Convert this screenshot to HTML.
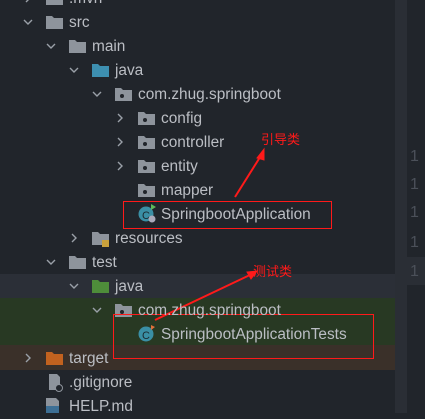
<!DOCTYPE html><html><head><meta charset="utf-8"><style>
body{margin:0;width:425px;height:413px;background:#21252b;position:relative;overflow:hidden;font-family:"Liberation Sans","Noto Sans CJK SC",sans-serif;font-size:15.4px;color:#bbbec4}
.r{position:absolute;left:0;height:24px;line-height:24px;white-space:nowrap}
.t{position:absolute;margin-top:1px}
.bg{position:absolute;left:0;width:407px}
.lab{position:absolute;color:#ff1a1a;font-size:13px;font-family:"Noto Sans CJK SC",sans-serif}
.n{position:absolute;left:410px;color:#4b5059;font-size:16px;line-height:20px}
</style></head><body>
<div class="bg" style="top:274px;height:24px;background:#2b2f37"></div>
<div class="bg" style="top:298px;height:47px;background:#283923"></div>
<div class="bg" style="top:345px;height:25px;background:#3a3029"></div>
<div style="position:absolute;left:395px;top:0;width:12px;height:413px;background:#2a2e35"></div>
<div style="position:absolute;left:407px;top:257px;width:18px;height:28px;background:#2a2e35"></div>
<div class="n" style="top:147px">1</div><div class="n" style="top:175px">1</div><div class="n" style="top:203px">1</div><div class="n" style="top:233px">1</div><div class="n" style="top:262px">1</div>
<svg width="425" height="413" style="position:absolute;left:0;top:0">
<defs>
<g id="cd"><path d="M-4 -2 L0 2 L4 -2" fill="none" stroke="#9aa0a8" stroke-width="1.4"/></g>
<g id="cr"><path d="M-2 -4 L2 0 L-2 4" fill="none" stroke="#9aa0a8" stroke-width="1.4"/></g>
<g id="fd"><path d="M0 0 H6 L8 2 H17 V13 H0 Z" fill="#8e949c"/></g>
<g id="pk"><path d="M0 0 H6 L8 2 H17 V13 H0 Z" fill="#8e949c"/><circle cx="7" cy="8" r="2" fill="#21252b"/></g>
</defs>
<use href="#cr" x="28" y="-2"/><use href="#fd" x="46" y="-8"/>
<use href="#cd" x="28" y="22"/><use href="#fd" x="46" y="16"/>
<use href="#cd" x="51" y="46"/><use href="#fd" x="69" y="40"/>
<use href="#cd" x="74" y="70"/><path d="M92 64 H98 L100 66 H109 V77 H92 Z" fill="#3d8fb0"/>
<use href="#cd" x="97" y="94"/><use href="#pk" x="115" y="88"/>
<use href="#cr" x="120" y="118"/><use href="#pk" x="138" y="112"/>
<use href="#cr" x="120" y="142"/><use href="#pk" x="138" y="136"/>
<use href="#cr" x="120" y="166"/><use href="#pk" x="138" y="160"/>
<use href="#pk" x="138" y="184"/>
<circle cx="146" cy="214" r="7.5" fill="#3a8fa5"/><text x="142" y="219" font-size="11" fill="#1a2a30" font-family="Liberation Sans">C</text><path d="M151 204 l5 3 -5 3z" fill="#5fb85a"/><circle cx="152" cy="219" r="3.5" fill="#aab"/>
<use href="#cr" x="74" y="238"/><use href="#fd" x="92" y="232"/><rect x="102" y="240" width="7" height="7" fill="#c9a13c"/>
<use href="#cd" x="51" y="262"/><use href="#fd" x="69" y="256"/>
<use href="#cd" x="74" y="286"/><path d="M92 280 H98 L100 282 H109 V293 H92 Z" fill="#4e8d3a"/>
<use href="#cd" x="97" y="310"/><use href="#pk" x="115" y="304"/>
<circle cx="146" cy="334" r="7.5" fill="#3a8fa5"/><text x="142" y="339" font-size="11" fill="#1a2a30" font-family="Liberation Sans">C</text><path d="M151 325 l4 2 -4 3z" fill="#e0703a"/>
<use href="#cr" x="28" y="358"/><path d="M46 352 H52 L54 354 H63 V365 H46 Z" fill="#c2621f"/>
<path d="M49 374 H57 L60 377 V390 H49 Z" fill="#8e949c"/><circle cx="59" cy="388" r="3.5" fill="#21252b" stroke="#8e949c"/>
<path d="M46 398 H56 L59 401 V413 H46 Z" fill="#8e949c"/><rect x="46" y="406" width="13" height="7" fill="#3d6f95"/>
<rect x="123.5" y="201.5" width="208" height="27" fill="none" stroke="#ff1a1a"/>
<rect x="113.5" y="314.5" width="260" height="44" fill="none" stroke="#ff1a1a"/>
<path d="M235 197 L262 154" stroke="#ff1a1a" stroke-width="2"/><path d="M264 149 L257 158 L264 160Z" fill="#ff1a1a" stroke="#ff1a1a"/>
<path d="M155 320 L252 274" stroke="#ff1a1a" stroke-width="2"/><path d="M257 271 L247 272 L251 279Z" fill="#ff1a1a" stroke="#ff1a1a"/>
</svg>
<div class="r t" style="left:69px;top:-14px">.mvn</div>
<div class="r t" style="left:69px;top:10px">src</div>
<div class="r t" style="left:92px;top:34px">main</div>
<div class="r t" style="left:115px;top:58px">java</div>
<div class="r t" style="left:138px;top:82px">com.zhug.springboot</div>
<div class="r t" style="left:161px;top:106px">config</div>
<div class="r t" style="left:161px;top:130px">controller</div>
<div class="r t" style="left:161px;top:154px">entity</div>
<div class="r t" style="left:161px;top:178px">mapper</div>
<div class="r t" style="left:161px;top:202px">SpringbootApplication</div>
<div class="r t" style="left:115px;top:226px">resources</div>
<div class="r t" style="left:92px;top:250px">test</div>
<div class="r t" style="left:115px;top:274px">java</div>
<div class="r t" style="left:138px;top:298px">com.zhug.springboot</div>
<div class="r t" style="left:161px;top:322px">SpringbootApplicationTests</div>
<div class="r t" style="left:69px;top:346px">target</div>
<div class="r t" style="left:69px;top:370px">.gitignore</div>
<div class="r t" style="left:69px;top:394px">HELP.md</div>
<div class="lab" style="left:261px;top:129px">引导类</div>
<div class="lab" style="left:253px;top:261px">测试类</div>
</body></html>
